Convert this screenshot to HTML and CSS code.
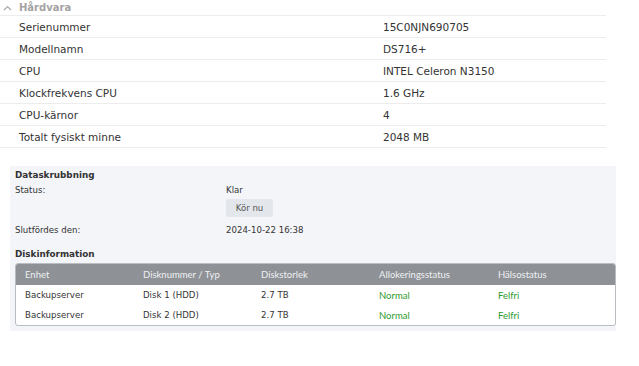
FILE: index.html
```html
<!DOCTYPE html>
<html lang="sv">
<head>
<meta charset="utf-8">
<link rel="stylesheet" href="styles.css">
</head>
<body>
<div class="section-head">
  <svg class="chev" width="9" height="6" viewBox="0 0 9 6"><path d="M1 5 L4.5 1.5 L8 5" fill="none" stroke="#aaa" stroke-width="1.2"/></svg>
  <span>Hårdvara</span>
</div>
<div class="props">
  <div class="row"><span class="k">Serienummer</span><span class="v">15C0NJN690705</span></div>
  <div class="row"><span class="k">Modellnamn</span><span class="v">DS716+</span></div>
  <div class="row"><span class="k">CPU</span><span class="v">INTEL Celeron N3150</span></div>
  <div class="row"><span class="k">Klockfrekvens CPU</span><span class="v">1.6 GHz</span></div>
  <div class="row"><span class="k">CPU-kärnor</span><span class="v">4</span></div>
  <div class="row"><span class="k">Totalt fysiskt minne</span><span class="v">2048 MB</span></div>
</div>
<div class="panel">
  <div class="ptitle">Dataskrubbning</div>
  <div class="prow"><span class="pk">Status:</span><div class="pv"><div class="line">Klar</div><button class="btn">Kör nu</button></div></div>
  <div class="prow done"><span class="pk">Slutfördes den:</span><div class="pv"><div class="line">2024-10-22 16:38</div></div></div>
  <div class="ptitle disk">Diskinformation</div>
  <div class="table">
    <div class="tr th"><span>Enhet</span><span>Disknummer / Typ</span><span>Diskstorlek</span><span>Allokeringsstatus</span><span>Hälsostatus</span></div>
    <div class="tr"><span>Backupserver</span><span>Disk 1 (HDD)</span><span>2.7 TB</span><span class="ok">Normal</span><span class="ok">Felfri</span></div>
    <div class="tr"><span>Backupserver</span><span>Disk 2 (HDD)</span><span>2.7 TB</span><span class="ok">Normal</span><span class="ok">Felfri</span></div>
  </div>
</div>
</body>
</html>
```
FILE: styles.css
```css
* { box-sizing: border-box; }
body {
  margin: 0;
  background: #fff;
  font-family: "DejaVu Sans", Verdana, sans-serif;
  color: #333;
  width: 639px;
}
.section-head {
  height: 16px;
  display: flex;
  align-items: center;
  gap: 7px;
  padding-left: 3px;
  font-size: 10px;
  font-weight: bold;
  color: #a3a3a3;
  border-bottom: 1px solid #ececec;
  width: 606px;
}
.props { width: 606px; }
.row {
  height: 22px;
  display: flex;
  align-items: center;
  border-bottom: 1px solid #ececec;
  font-size: 10.5px;
  color: #333;
}
.k { width: 383px; padding-left: 19px; }
.v { flex: 1; }
.panel {
  margin: 18px 23px 0 10px;
  background: #f4f5f8;
  padding: 2px 0 5px 5px;
  font-size: 8.6px;
  color: #333;
}
.ptitle {
  font-weight: bold;
  font-size: 8.8px;
  height: 14px;
  display: flex;
  align-items: center;
}
.ptitle.disk { margin-top: 10px; }
.prow { display: flex; margin-top: 1px; }
.prow.done { margin-top: 6px; }
.pk { width: 211px; height: 14px; display: flex; align-items: center; }
.pv { display: flex; flex-direction: column; }
.line { height: 14px; display: flex; align-items: center; }
.btn {
  margin-top: 2px;
  width: 47px;
  height: 18px;
  border: none;
  border-radius: 2px;
  background: #e3e7ec;
  color: #555;
  font-family: inherit;
  font-size: 8.6px;
  padding: 0;
}
.table {
  margin-top: 2px;
  border: 1px solid #b9bcc0;
  border-radius: 3px;
  overflow: hidden;
  background: #fff;
}
.tr {
  display: grid;
  grid-template-columns: 118px 118px 118px 119px 1fr;
  padding-left: 9px;
  height: 20px;
  align-items: center;
  font-size: 8.6px;
}
.tr.th {
  height: 21px;
  background: #8e9297;
  color: #eef0f2;
  font-family: "Lato", "Open Sans", sans-serif;
  font-size: 9.5px;
}
.ok { color: #2e9a2e; font-family: "Lato", "Open Sans", sans-serif; font-size: 9.5px; }
```
